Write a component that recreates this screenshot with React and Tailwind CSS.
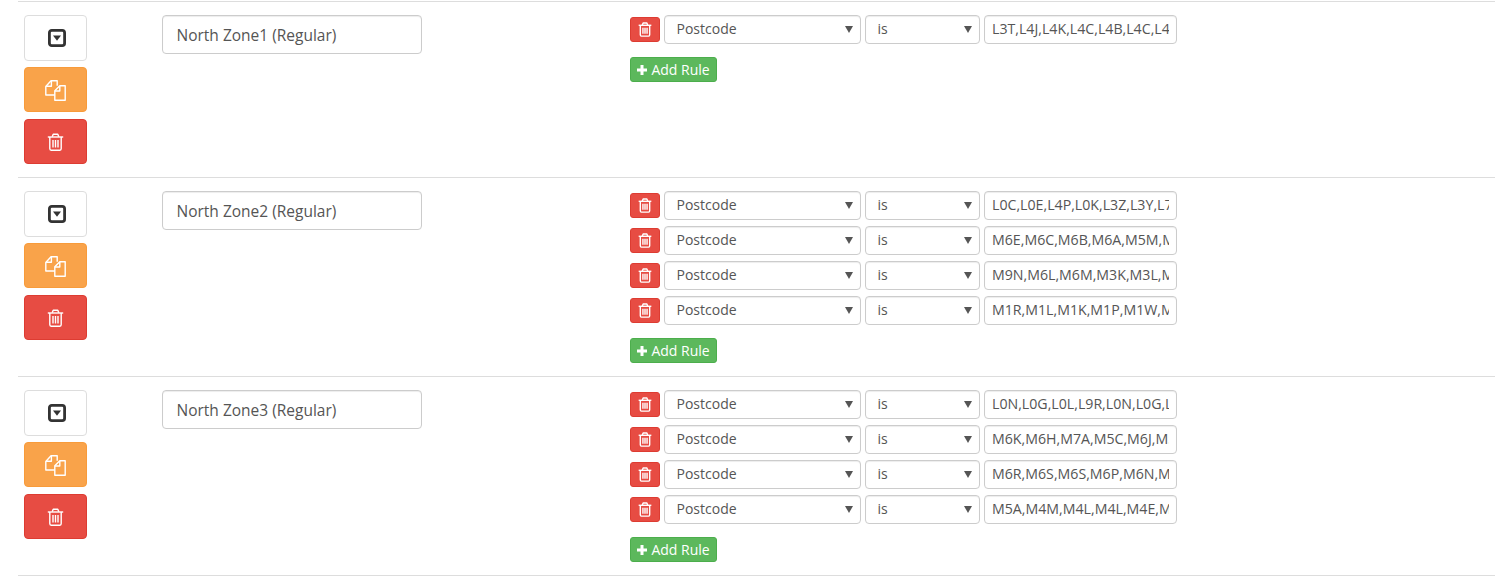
const zones = [
  { name: 'North Zone1 (Regular)', rules: ['L3T,L4J,L4K,L4C,L4B,L4C,L4E,L4G,L4H'] },
  {
    name: 'North Zone2 (Regular)',
    rules: [
      'L0C,L0E,L4P,L0K,L3Z,L3Y,L7E,L9N',
      'M6E,M6C,M6B,M6A,M5M,M5N,M5P,M4R',
      'M9N,M6L,M6M,M3K,M3L,M3M,M3N,M3H',
      'M1R,M1L,M1K,M1P,M1W,M1T,M1S,M1V',
    ],
  },
  {
    name: 'North Zone3 (Regular)',
    rules: [
      'L0N,L0G,L0L,L9R,L0N,L0G,L0M,L9V',
      'M6K,M6H,M7A,M5C,M6J,M5T,M5V,M5H',
      'M6R,M6S,M6S,M6P,M6N,M6G,M5R,M5S',
      'M5A,M4M,M4L,M4L,M4E,M4K,M4J,M4C',
    ],
  },
];

function CaretSquareIcon() {
  return (
    <svg width="18" height="18" viewBox="0 0 18 18" className="ml-[3px]">
      <rect x="1.4" y="1.4" width="15.2" height="15.2" rx="2.4" fill="#fff" stroke="#333" strokeWidth="2.8" />
      <path d="M5 6.6h8l-4 5.2z" fill="#333" />
    </svg>
  );
}

function CopyIcon() {
  return (
    <svg width="21" height="21" viewBox="0 0 21 21" fill="none" stroke="#fff" strokeWidth="1.4" strokeLinejoin="round" className="mt-[2px]">
      <path d="M9.8 15H.8V6.4L6 .8h6.2v5" />
      <path d="M6.4 1v5.2H.9" />
      <path d="M9.8 20.2v-9.4l5-5h5.4v14.4z" />
      <path d="M14.8 6v5H9.9" />
    </svg>
  );
}

function TrashIcon({ size = 17, stroke = 1.4 }) {
  return (
    <svg width={size} height={size * 18 / 17} viewBox="0 0 17 18" fill="none" stroke="#fff" strokeWidth={stroke} strokeLinejoin="round">
      <path d="M.8 4h15.4" />
      <path d="M5.2 3.8 6.2 1.2h4.6l1 2.6" />
      <path d="M2.8 4v11.6c0 .9.6 1.6 1.3 1.6h8.8c.7 0 1.3-.7 1.3-1.6V4" />
      <path d="M6 7v7.400M8.500 7v7.400M11 7v7.400" />
    </svg>
  );
}

function PlusIcon() {
  return (
    <svg width="10" height="10" viewBox="0 0 10 10" fill="#fff">
      <path d="M3.5 0h3v3.5H10v3H6.500V10h-3V6.500H0v-3h3.500z" />
    </svg>
  );
}

function SelectBox({ label, width }) {
  return (
    <div className={`relative ml-[4px] ${width}`}>
      <select className="appearance-none w-full h-[29px] bg-white border border-[#ccc] rounded-[4px] pl-[11.500px] pb-[2px] text-[14px] text-[#555] shadow-[inset_0_1px_1px_rgba(0,0,0,0.075)]">
        <option>{label}</option>
      </select>
      <span className="absolute right-[8px] top-[11px] w-0 h-0 border-x-[4px] border-x-transparent border-t-[7px] border-t-[#555] pointer-events-none" />
    </div>
  );
}

function RuleRow({ value }) {
  return (
    <div className="flex items-center mb-[6px] h-[29px]">
      <button className="w-[30px] h-[25px] flex items-center justify-center rounded-[3px] bg-[#e74c43] border border-[#dd3c32]">
        <TrashIcon size={14} stroke={1.7} />
      </button>
      <SelectBox label="Postcode" width="w-[197px]" />
      <SelectBox label="is" width="w-[115px]" />
      <input
        readOnly
        value={value}
        className="w-[193px] h-[29px] ml-[4px] pb-[2px] bg-white border border-[#ccc] rounded-[4px] px-[7px] text-[14.18px] text-[#555] shadow-[inset_0_1px_1px_rgba(0,0,0,0.075)]"
      />
    </div>
  );
}

function ZoneRow({ zone }) {
  return (
    <div className="flex border-t border-[#ddd] pt-[13px] pb-[13px]">
      <div className="w-[144px] pl-[6px] shrink-0">
        <button className="w-[63px] h-[46px] flex items-center justify-center bg-white border border-[#ddd] rounded-[4px]">
          <CaretSquareIcon />
        </button>
        <button className="w-[63px] h-[45px] mt-[6px] flex items-center justify-center bg-[#f9a34a] border border-[#f89b3a] rounded-[4px]">
          <CopyIcon />
        </button>
        <button className="w-[63px] h-[45px] mt-[7px] flex items-center justify-center bg-[#e74c43] border border-[#dd3c32] rounded-[4px]">
          <TrashIcon />
        </button>
      </div>
      <div className="w-[468px] shrink-0">
        <input
          readOnly
          value={zone.name}
          className="w-[260px] h-[39px] pl-[13.500px] pr-[14px] pt-px bg-white border border-[#ccc] rounded-[4px] text-[15.5px] text-[#555] shadow-[inset_0_1px_1px_rgba(0,0,0,0.075)]"
        />
      </div>
      <div>
        {zone.rules.map((rule) => (
          <RuleRow key={rule} value={rule} />
        ))}
        <button className="mt-[13px] w-[87px] h-[25px] flex items-center justify-center gap-[4px] bg-[#5cb85c] border border-[#4cae4c] rounded-[3px] text-[14px] text-white">
          <PlusIcon />
          Add Rule
        </button>
      </div>
    </div>
  );
}

export default function App() {
  return (
    <div className="bg-white pt-px pl-[18px] font-['Open_Sans',sans-serif]">
      {zones.map((zone) => (
        <ZoneRow key={zone.name} zone={zone} />
      ))}
      <div className="border-t border-[#ddd]" />
    </div>
  );
}
